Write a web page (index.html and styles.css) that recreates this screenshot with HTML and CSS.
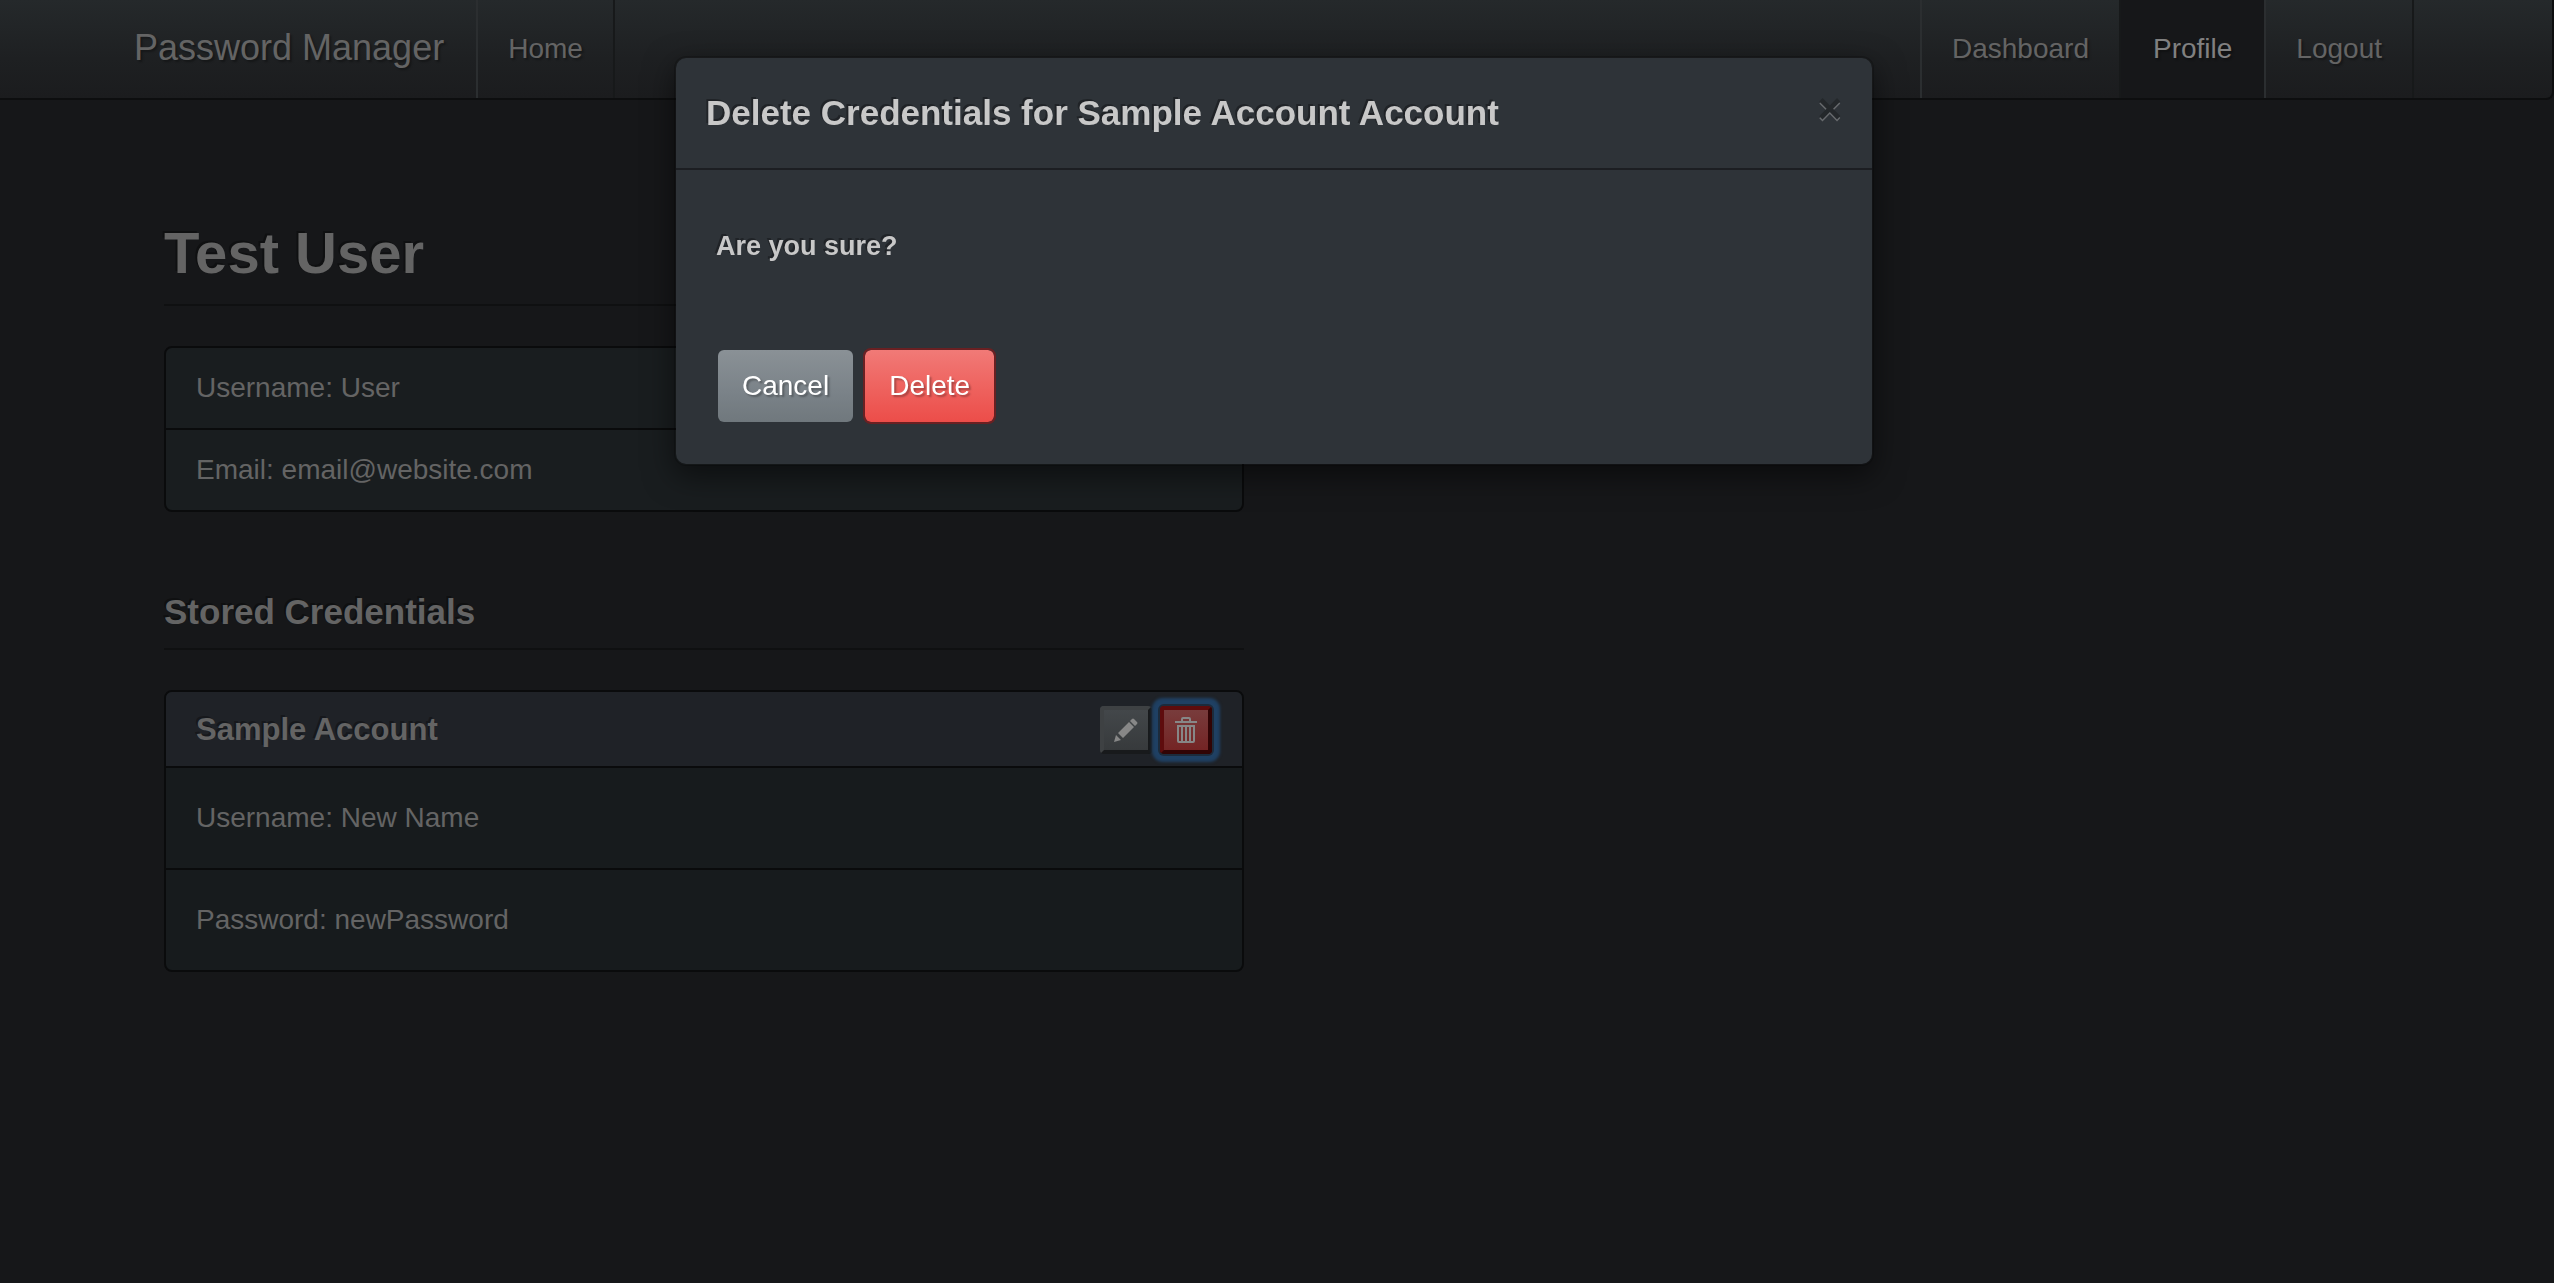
FILE: index.html
```html
<!DOCTYPE html>
<html lang="en">
<head>
  <meta charset="utf-8">
  <title>Password Manager</title>
  <link rel="stylesheet" href="styles.css">
</head>
<body>
  <header class="navbar">
    <nav class="container navbar-inner">
      <a class="brand" href="#">Password Manager</a>
      <a class="nav-link" href="#">Home</a>
      <div class="nav-right">
        <a class="nav-link" href="#">Dashboard</a>
        <a class="nav-link active" href="#">Profile</a>
        <a class="nav-link" href="#">Logout</a>
      </div>
    </nav>
  </header>

  <main class="page">
    <div class="container">
      <div class="column">
        <h1 class="page-title">Test User</h1>
        <ul class="box">
          <li class="box-row">Username: User</li>
          <li class="box-row">Email: email@website.com</li>
        </ul>

        <h2 class="section-title">Stored Credentials</h2>
        <section class="box credentials">
          <div class="box-head">
            <h3 class="box-title">Sample Account</h3>
            <div class="actions">
              <button class="icon-button edit" type="button" aria-label="Edit">
                <svg width="26" height="26" viewBox="0 0 26 26" fill="currentColor" aria-hidden="true">
                  <path d="M1 25l2-7 5 5zM5 16L16 5l5 5L10 21zM17 4l2-2q1-1 2 0l3 3q1 1 0 2l-2 2z"/>
                </svg>
              </button>
              <button class="icon-button trash" type="button" aria-label="Delete">
                <svg width="26" height="26" viewBox="0 0 26 26" aria-hidden="true">
                  <path fill="currentColor" d="M2 4h6V2q0-2 2-2h6q2 0 2 2v2h6v2H2zM10 2v2h6V2z" fill-rule="evenodd"/>
                  <path fill="none" stroke="currentColor" stroke-width="2" d="M5 9h16v15q0 1-1 1H6q-1 0-1-1zM9 9v16M13 9v16M17 9v16"/>
                </svg>
              </button>
            </div>
          </div>
          <p class="box-row tall">Username: New Name</p>
          <p class="box-row tall">Password: newPassword</p>
        </section>
      </div>
    </div>
  </main>

  <div class="modal-layer">
    <div class="modal" role="dialog" aria-modal="true" aria-labelledby="modal-title">
      <div class="modal-head">
        <h2 class="modal-title" id="modal-title">Delete Credentials for Sample Account Account</h2>
        <button class="close" type="button" aria-label="Close">×</button>
      </div>
      <div class="modal-body">
        <p class="question">Are you sure?</p>
        <div class="modal-buttons">
          <button class="btn btn-cancel" type="button">Cancel</button>
          <button class="btn btn-delete" type="button">Delete</button>
        </div>
      </div>
    </div>
  </div>
</body>
</html>
```
FILE: styles.css
```css
* {
  box-sizing: border-box;
}

body {
  margin: 0;
  min-height: 100vh;
  background: #161719;
  color: #646464;
  font: 28px/40px "Liberation Sans", Arial, sans-serif;
}

h1, h2, h3, p, ul {
  margin: 0;
  padding: 0;
}

h1, h2, h3, .question {
  font-weight: 700;
  text-shadow: -2px -2px 0 rgba(0, 0, 0, 0.3);
}

a {
  color: inherit;
  text-decoration: none;
}

.container {
  max-width: 2340px;
  margin: 0 auto;
  padding: 0 30px;
}

/* Navigation */
.navbar {
  padding-right: 4px;
  border: solid #0d0e0f;
  border-width: 0 2px 2px 0;
  border-radius: 0 0 8px 0;
  background: linear-gradient(#25292b, #1e2022 60%, #1b1c1e);
  text-shadow: 2px 2px 2px rgba(0, 0, 0, 0.3);
}

.navbar-inner {
  display: flex;
}

.brand {
  padding: 28px 32px 30px 0;
  font-size: 36px;
}

.nav-right {
  display: flex;
  margin-left: auto;
}

.nav-link {
  padding: 29px 30px;
  border: solid #2b2e30;
  border-width: 0 2px;
  border-right-color: #17191a;
}

.nav-link.active {
  background: #161719;
  border-color: #161719;
  color: #808080;
}

/* Profile */
.page {
  padding-right: 6px;
}

.column {
  width: 50%;
  padding: 0 30px;
}

.page-title {
  margin: 120px 0 40px;
  padding-bottom: 18px;
  border-bottom: 2px solid #0f1011;
  font-size: 58px;
  line-height: 66px;
}

.section-title {
  margin: 80px 0 40px;
  padding-bottom: 16px;
  border-bottom: 2px solid #0f1011;
  font-size: 35px;
}

.box {
  border: 2px solid #0a0b0c;
  border-radius: 8px;
  background: #191d1f;
  list-style: none;
}

.credentials {
  background: #171b1d;
}

.box-row {
  padding: 20px 30px;
}

.box-row + .box-row,
.box-head + .box-row {
  border-top: 2px solid #0a0b0c;
}

.box-row.tall {
  padding: 30px;
}

.box-head {
  display: flex;
  align-items: center;
  justify-content: space-between;
  padding: 14px 30px 12px;
  border-radius: 6px 6px 0 0;
  background: #1f2227;
}

.box-title {
  font-size: 31px;
}

.actions {
  display: flex;
  gap: 8px;
}

.icon-button {
  display: flex;
  align-items: center;
  justify-content: center;
  width: 52px;
  height: 48px;
  padding: 0;
  border: 4px solid;
  border-radius: 4px;
  color: #878787;
}

.edit {
  border-color: #3e4143 #181a1c #181a1c #3e4143;
  background: linear-gradient(#43474a, #373a3c);
}

.trash {
  border-color: #5e0c0d #310405 #310405 #5e0c0d;
  background: linear-gradient(#783c3c, #742424);
  box-shadow: 0 0 0 2px #1c2b3c, 0 0 3px 8px #1f4063;
}

/* Dialog */
.modal-layer {
  position: fixed;
  inset: 0 6px 0 0;
  display: flex;
  align-items: flex-start;
  justify-content: center;
  padding-top: 56px;
}

.modal {
  width: 1200px;
  max-width: 100%;
  border: 2px solid rgba(0, 0, 0, 0.2);
  border-radius: 12px;
  background: #2e3338;
  background-clip: padding-box;
  box-shadow: 0 10px 30px rgba(0, 0, 0, 0.5);
  color: #c8c8c8;
}

.modal-head {
  display: flex;
  justify-content: space-between;
  padding: 30px;
  border-bottom: 2px solid #1c1e22;
}

.modal-title {
  font-size: 35px;
  line-height: 50px;
}

.close {
  height: 42px;
  padding: 0;
  border: 0;
  background: none;
  color: #24282b;
  font: bold 42px/42px "Liberation Sans", Arial, sans-serif;
  text-shadow: 0 2px 0 #686b6e;
}

.modal-body {
  padding: 56px 40px 40px;
}

.question {
  font-size: 27px;
}

.modal-buttons {
  display: flex;
  gap: 8px;
  margin-top: 82px;
}

.btn {
  padding: 16px 24px;
  border: 2px solid transparent;
  border-radius: 8px;
  color: #fff;
  font: inherit;
  text-shadow: 2px 2px 2px rgba(0, 0, 0, 0.3);
}

.btn-cancel {
  background: linear-gradient(#8a9196, #7a8288 60%, #70787d) padding-box;
}

.btn-delete {
  border-color: #6a2022;
  background: linear-gradient(#f17a77, #ee5f5b 60%, #ec4d49) padding-box;
}
```
